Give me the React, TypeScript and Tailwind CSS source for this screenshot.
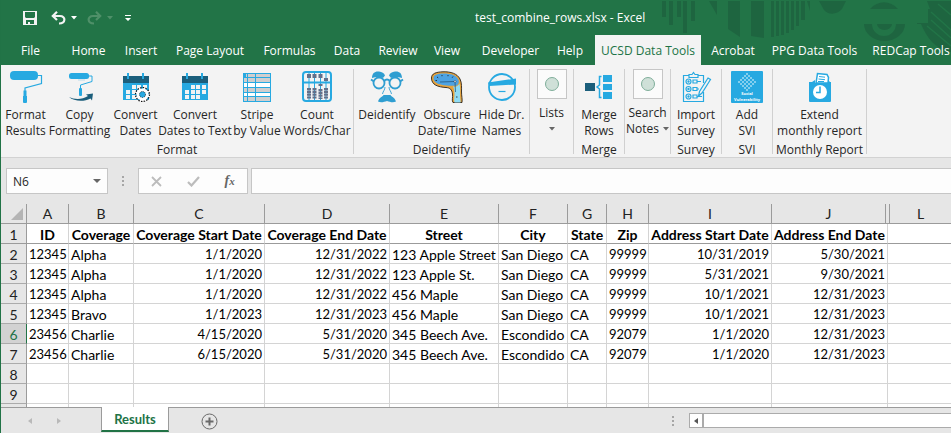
import type { ReactNode } from "react";

const BLUE = "#27a9e1";
const NAVY = "#1b5e7b";

/* ---------- ribbon icons, all on a 32 x 32 grid ---------- */

function Icon({ children }: { children: ReactNode }) {
  return (
    <svg viewBox="0 0 32 32" className="h-8 w-8 shrink-0 overflow-visible" fill="none" aria-hidden="true">
      {children}
    </svg>
  );
}

const RollerIcon = () => (
  <Icon>
    <rect x="0" y="0" width="28" height="9" rx="4" fill={BLUE} />
    <path d="M28 4.500h3.500v8L15 17v3" stroke={BLUE} strokeWidth="1.200" />
    <path d="M13.500 19.500h3v5.500h.5v6a1 1 0 0 1-1 1h-2a1 1 0 0 1-1-1v-6h.5z" fill={BLUE} />
  </Icon>
);

const CopyRollerIcon = () => (
  <Icon>
    <rect x="5" y="2" width="20" height="6" rx="2.500" fill={BLUE} />
    <path d="M25 5h3v5.500L16.500 14v3" stroke={BLUE} strokeWidth="1" />
    <rect x="15" y="17" width="3" height="8" rx="1" fill={BLUE} />
    <path d="M14 9h7" stroke={BLUE} strokeOpacity=".3" />
    <path d="M5 26c5 2.500 13 3 19-1l-2-1.500 7-1-1 7-1.500-2C20 31 10 30.500 5 26z" fill={NAVY} />
  </Icon>
);

function CalendarBase() {
  return (
    <>
      <rect x="3" y="5" width="26" height="24" fill={BLUE} />
      <rect x="3" y="5" width="26" height="7" fill={NAVY} />
      <rect x="7" y="2" width="2" height="6" fill={BLUE} />
      <rect x="22" y="2" width="2" height="6" fill={BLUE} />
      {[13, 18, 23].map((y) =>
        [6, 12, 17, 23].map((x) =>
          (y === 13 && x === 6) || (y === 23 && x === 23) ? null : (
            <rect key={`${x}-${y}`} x={x} y={y + 1} width="4" height="4" fill="#f3f3f3" />
          ),
        ),
      )}
    </>
  );
}

const CalendarIcon = () => (
  <Icon>
    <CalendarBase />
  </Icon>
);

const CalendarGearIcon = () => (
  <Icon>
    <CalendarBase />
    <circle cx="22.500" cy="23.500" r="6" fill="#fff" />
    <circle cx="22.500" cy="23.500" r="6.500" stroke="#fff" strokeWidth="2.500" strokeDasharray="2.600 2.500" />
    <circle cx="22.500" cy="23.500" r="7" stroke="#111" strokeWidth="1.200" strokeDasharray="1.500 1.250" />
    <circle cx="22.500" cy="23.500" r="3" fill={BLUE} stroke="#111" strokeWidth=".8" strokeDasharray="1 1" />
  </Icon>
);

const StripeIcon = () => (
  <Icon>
    <rect x="2" y="2" width="28" height="29" fill="#fff" />
    <rect x="2" y="2" width="28" height="4" fill="#d0cece" />
    <rect x="2" y="2" width="3" height="4" fill={BLUE} />
    <rect x="2" y="7" width="28" height="4" fill="#d0cece" />
    <rect x="2" y="17" width="28" height="5" fill="#d0cece" />
    <rect x="2" y="26" width="28" height="4" fill="#d0cece" />
    <path
      d="M2 2.500h28M2 6.500h28M2 11.500h28M2 16.500h28M2 21.500h28M2 25.500h28M2 30.500h28M2.500 2v29M6.500 2v29M14.500 2v29M29.500 2v29"
      stroke={BLUE}
      shapeRendering="crispEdges"
    />
  </Icon>
);

const AbacusIcon = () => (
  <Icon>
    <rect x="2" y="1" width="28" height="29" rx="3" fill="#f3f3f3" stroke={BLUE} strokeWidth="2" />
    <path d="M2 11.500h28" stroke={BLUE} strokeWidth="2" />
    <path d="M8 2v27M13.500 2v27M19.500 2v27M25 2v27" stroke={BLUE} strokeWidth="1" />
    <path d="M8 3v4M13.500 3v4M19.500 3v4M25 7v3" stroke="#63708a" strokeWidth="4" />
    <path d="M8 17v11M13.500 17v11M19.500 13v2M19.500 18v10M25 17v11" stroke="#63708a" strokeWidth="4" strokeDasharray="2.200 .6" />
  </Icon>
);

const DisguiseIcon = () => (
  <Icon>
    <g fill="#2f9ed1">
      <path d="M1 7c0-5 3-7 7-6.500 3 .3 5 1.500 6 4L12 7C9 5.500 5 5.500 1 7z" />
      <path d="M31 7c0-5-3-7-7-6.500-3 .3-5 1.500-6 4L20 7c3-1.500 7-1.500 11 0z" />
      <path d="M12.500 24h7c1 2 4 2 5.500 6.500-3 1.500-6 .500-9-.5-3 1-6 2-9 .5C8.500 26 11.500 26 12.500 24z" />
    </g>
    <g stroke="#2f9ed1">
      <circle cx="8" cy="12" r="5.500" strokeWidth="1.800" />
      <circle cx="24" cy="12" r="5.500" strokeWidth="1.800" />
      <path d="M13 10c2-2 4-2 6 0M0 8.500l3 2M32 8.500l-3 2" strokeWidth="2" />
      <path d="M14 16c0 3-2 4-2.500 7M18 16c0 3 2 4 2.500 7" strokeWidth=".9" />
    </g>
  </Icon>
);

const MeltingClockIcon = () => (
  <Icon>
    <path
      d="M.5 7C.5 2.500 5 1 12 .8c8-.2 14 1.700 17 7.200 2 4 1.500 9 1.500 13 0 4 1 7 .5 10.500h-9c-1.500-2 0-5-.5-8.500C21 18.500 19 16.800 15 16.500 7 16 .5 14 .5 7z"
      fill="#e8a33c"
      stroke="#2b2318"
      strokeWidth=".9"
    />
    <path d="M2.500 7c0-3 4-4.500 10-4.500 8 0 13 2 15 6.500 1 3-.5 6-4 5.800C19 14.500 17 14.800 13 14.200 6.500 13.500 2.500 11 2.500 7z" fill="#4da3e3" />
    <path d="M22 15.500c3 .5 5.500-.5 6.500-3 1 5 .5 8 .5 12 0 3 .8 5 .5 7h-6c-1-3 .3-6 0-9.500-.2-2.500-.5-4.500-1.500-6.500z" fill="#8fdcf5" />
    <path d="M9 11l15-.5M24 11l.5 10" stroke="#1f4a6b" strokeWidth=".7" />
    <path d="M6 6l1.200.8M11 4v1.200M17 4v1.200M22 5.500l-.8 1.200M4.500 9.500h1.500M25 26h1.500" stroke="#1b1b1b" strokeWidth=".8" />
    <circle cx="24" cy="10.500" r="1" fill="#fff" stroke="#234" strokeWidth=".5" />
  </Icon>
);

const BlindfoldIcon = () => (
  <Icon>
    <circle cx="16" cy="16" r="13" stroke={BLUE} strokeWidth="1.800" />
    <path d="M2 11.500l28-4v6L3 15z" fill={BLUE} />
    <path d="M12.500 20.500h7" stroke={BLUE} strokeWidth="1.200" />
  </Icon>
);

const MergeIcon = () => (
  <Icon>
    <rect x="2" y="12" width="10" height="8" fill={NAVY} />
    <rect x="20" y="4" width="9" height="7" fill={BLUE} />
    <rect x="20" y="13" width="9" height="6" fill={BLUE} />
    <rect x="20" y="21" width="9" height="7" fill={BLUE} />
    <path d="M18.500 5.500h-2v8.500L14 16l2.500 2v8.500h2" stroke={BLUE} strokeWidth="1.500" />
  </Icon>
);

const SurveyIcon = () => (
  <Icon>
    <g stroke={BLUE} strokeWidth="1.200">
      <path d="M23.500 21v9.500h-20v-26h6M18 4.500h5.500V12M9 6.500v-3h3l1.500-2 1.500 2h3v3z" />
      <circle cx="8.500" cy="10.500" r="2.500" />
      <circle cx="8.500" cy="18" r="2.500" />
      <circle cx="8.500" cy="25.500" r="2.500" />
      <circle cx="8.500" cy="10.500" r=".6" />
      <circle cx="8.500" cy="18" r=".6" />
      <circle cx="8.500" cy="25.500" r=".6" />
      <path d="M13 9h4v3h-4zM13 16.500h4v3h-4zM13 24h4v3h-4zM17 10.500h4M17 18h2M17 25.500h5" />
      <path d="M28 7l2.500 1.500L22 22l-3.500 3 1-4.500z" />
    </g>
  </Icon>
);

const SviIcon = () => (
  <Icon>
    <rect width="32" height="32" rx="1" fill={BLUE} />
    <g fill="#fff">
      {[
        [16, 3], [14, 5], [18, 5], [12, 7], [16, 7], [20, 7], [10, 9], [14, 9], [18, 9], [22, 9],
        [8, 11], [12, 11], [16, 11], [20, 11], [24, 11], [10, 13], [14, 13], [18, 13], [22, 13],
        [12, 15], [16, 15], [20, 15], [14, 17], [18, 17], [16, 19],
      ].map(([x, y]) => (
        <circle key={`${x}-${y}`} cx={x} cy={y} r=".8" />
      ))}
    </g>
    <g fontSize="4" fontWeight="700" fill="#fff" textAnchor="middle" fontFamily="Open Sans, sans-serif">
      <text x="16" y="24">
        Social
      </text>
      <text x="16" y="30">
        Vulnerability
      </text>
    </g>
  </Icon>
);

const ReportClockIcon = () => (
  <Icon>
    <path d="M12 12l1.500-9.500L23 3.500l1.500 3L24 12z" fill="#fff" stroke={BLUE} strokeWidth="1.500" />
    <path d="M15 5.500l6 .7M14.500 8l6.500.7M14 10.500h6" stroke={BLUE} strokeWidth="1" />
    <path d="M5 11h3l3-2v3h13V9l2 2h1v19a1 1 0 0 1-1 1H6a1 1 0 0 1-1-1z" fill={BLUE} />
    <circle cx="16" cy="21" r="7" fill="#fff" />
    <path d="M16 15.500V21.500h-4" stroke={BLUE} strokeWidth="1.500" />
  </Icon>
);

/* ---------- ribbon building blocks ---------- */

function RibbonButton({ icon, lines, width }: { icon: ReactNode; lines: string[]; width: string }) {
  return (
    <button type="button" className={`flex flex-col items-center pt-1.5 ${width}`}>
      {icon}
      <span className="mt-1 block leading-4 whitespace-nowrap">
        {lines.map((l) => (
          <span key={l} className="block">
            {l}
          </span>
        ))}
      </span>
    </button>
  );
}

function GalleryButton({ first, second, width }: { first: string; second?: string; width: string }) {
  return (
    <button type="button" className={`flex flex-col items-center pt-1 ${width}`}>
      <span className="flex h-[30px] w-[30px] items-center justify-center border border-[#c6c6c6] bg-[#fbfbfb]">
        <span className="h-3.5 w-3.5 rounded-full border border-[#7fae9a] bg-[#cfe0d8]" />
      </span>
      <span className="mt-1.5 block leading-4">{first}</span>
      <span className="flex h-4 items-center gap-1">
        {second}
        <Caret className="text-[#666]" />
      </span>
    </button>
  );
}

function Caret({ className }: { className: string }) {
  return (
    <svg viewBox="0 0 6 4" className={`h-1 w-1.5 ${className}`} aria-hidden="true">
      <path d="M0 0h6L3 3.500z" fill="currentColor" />
    </svg>
  );
}

function Group({ label, width, children }: { label?: string; width: string; children: ReactNode }) {
  return (
    <section aria-label={label} className={`flex shrink-0 flex-col ${width}`}>
      <div className="flex h-[77px]">{children}</div>
      <div className="text-center leading-[15px]">{label}</div>
    </section>
  );
}

const Divider = () => <div className="mt-1 h-[85px] w-px shrink-0 bg-[#d0d0d0]" />;

const tabs = [
  { name: "File", width: "w-[59px]" },
  { name: "Home", width: "w-[57px]" },
  { name: "Insert", width: "w-[48px]" },
  { name: "Page Layout", width: "w-[90px]" },
  { name: "Formulas", width: "w-[69px]" },
  { name: "Data", width: "w-[46px]" },
  { name: "Review", width: "w-[56px]" },
  { name: "View", width: "w-[42px]" },
  { name: "Developer", width: "w-[85px]" },
  { name: "Help", width: "w-[42px] pr-2" },
  { name: "UCSD Data Tools", width: "w-[106px]" },
  { name: "Acrobat", width: "w-[64px]" },
  { name: "PPG Data Tools", width: "w-[99px]" },
  { name: "REDCap Tools", width: "w-[94px]" },
];

function TitleArt() {
  return (
    <svg viewBox="660 0 291 66" className="absolute top-0 right-0 h-[66px] w-[291px]" fill="#1e6540" aria-hidden="true">
      <path d="M662 1h4v16h-4zM669 1h4v24h-4zM677 1h4v16h-4zM683 1h4v32h-4zM691 1h4v20h-4z" />
      <path d="M709 1h8v14zM728 1h12v36l-12-8zM751 1h13v37l-13-2z" />
      <path d="M771 1h3v36h-3zM776 1h3v35h-3zM781 1h3v34h-3zM786 1h3v32h-3zM791 1h3v29h-3zM796 1h3v25h-3zM801 1h4v19h-4zM807 1h3v10z" />
      <path d="M819 1h27l-4 8c-5 6-14 6-18 1z" />
      <path d="M870 9c8-9 20-9 28 0z" />
      <path d="M864 24h8a12 12 0 0 0 24 0h9a20.500 17 0 0 1-41 0zM877 24h15a7.500 6 0 0 1-15 0z" />
      <path d="M917 9h13l-3-8h24v51c-16-3-24-14-30-28h-4v-1h11V9z" />
      <path d="M931 12l20 18M931 20l20 18M927 26l24 20M938 4l13 11" stroke="#227447" strokeWidth="1.500" />
    </svg>
  );
}

/* ---------- sheet data ---------- */

const headings = [
  "ID", "Coverage", "Coverage Start Date", "Coverage End Date", "Street",
  "City", "State", "Zip", "Address Start Date", "Address End Date",
];

const rows = [
  ["12345", "Alpha", "1/1/2020", "12/31/2022", "123 Apple Street", "San Diego", "CA", "99999", "10/31/2019", "5/30/2021"],
  ["12345", "Alpha", "1/1/2020", "12/31/2022", "123 Apple St.", "San Diego", "CA", "99999", "5/31/2021", "9/30/2021"],
  ["12345", "Alpha", "1/1/2020", "12/31/2022", "456 Maple", "San Diego", "CA", "99999", "10/1/2021", "12/31/2023"],
  ["12345", "Bravo", "1/1/2023", "12/31/2023", "456 Maple", "San Diego", "CA", "99999", "10/1/2021", "12/31/2023"],
  ["23456", "Charlie", "4/15/2020", "5/31/2020", "345 Beech Ave.", "Escondido", "CA", "92079", "1/1/2020", "12/31/2023"],
  ["23456", "Charlie", "6/15/2020", "5/31/2020", "345 Beech Ave.", "Escondido", "CA", "92079", "1/1/2020", "12/31/2023"],
  [], [], [],
];

const VISIBLE_ROWS = 9;
const numeric = [true, false, true, true, false, false, false, true, true, true];

function RowHeader({ n, dark }: { n: number; dark?: boolean }) {
  const active = n === 6;
  return (
    <th
      scope="row"
      className={`h-5 border-r border-b px-0 pt-0.5 pb-0 text-[14px] font-normal ${
        active
          ? "border-r-[#217346] border-b-[#ababab] bg-[#d2d2d2] text-[#217346]"
          : `border-r-[#9b9b9b] bg-[#e6e6e6] text-[#222] ${dark ? "border-b-[#9b9b9b]" : "border-b-[#ababab]"}`
      }`}
    >
      {n <= VISIBLE_ROWS ? n : null}
    </th>
  );
}

function Sheet() {
  return (
    <table className="w-full table-fixed border-separate border-spacing-0 font-['Lato','Liberation_Sans',sans-serif] text-[14px] leading-[17px] text-black">
      <colgroup>
        <col className="w-[26px]" />
        <col className="w-[42px]" />
        <col className="w-[65px]" />
        <col className="w-[131px]" />
        <col className="w-[125px]" />
        <col className="w-[109px]" />
        <col className="w-[69px]" />
        <col className="w-[39px]" />
        <col className="w-[42px]" />
        <col className="w-[123px]" />
        <col className="w-[114px]" />
        <col className="w-[2px]" />
        <col className="w-[2px]" />
        <col />
      </colgroup>
      <thead>
        <tr className="bg-[#e6e6e6] text-[#222]">
          <td className="h-5 border-r border-b border-[#9b9b9b] p-0">
            <svg viewBox="0 0 12 12" className="ml-2.5 h-3 w-3" aria-hidden="true">
              <path d="M12 0v12H0z" fill="#b4b4b4" />
            </svg>
          </td>
          {["A", "B", "C", "D", "E", "F", "G", "H", "I", "J"].map((c) => (
            <th key={c} scope="col" className="h-5 border-r border-b border-[#9b9b9b] p-0 font-normal">
              {c}
            </th>
          ))}
          <td colSpan={2} className="border-r border-b border-[#9b9b9b] p-0" />
          <th scope="col" className="h-5 border-b border-[#9b9b9b] p-0 font-normal">
            L
          </th>
        </tr>
      </thead>
      <tbody>
        <tr>
          <RowHeader n={1} dark />
          {headings.map((h, i) => (
            <th
              key={h}
              scope="col"
              colSpan={i === 9 ? 2 : 1}
              className="h-5 border-r border-b border-r-[#d4d4d4] border-b-[#9b9b9b] px-0 pt-0.5 pb-0 text-center font-bold whitespace-nowrap"
            >
              {h}
            </th>
          ))}
          <td colSpan={2} className="border-b border-[#9b9b9b] p-0" />
        </tr>
        {rows.map((row, r) => (
          <tr key={r}>
            <RowHeader n={r + 2} />
            {headings.map((h, i) => (
              <td
                key={h}
                colSpan={i === 9 ? 2 : 1}
                className={`h-5 border-r border-b border-[#d4d4d4] px-0.5 pt-0.5 pb-0 whitespace-nowrap ${
                  numeric[i] ? "text-right text-[13px]" : "text-left"
                }`}
              >
                {row[i]}
              </td>
            ))}
            <td colSpan={2} className="border-b border-[#d4d4d4] p-0" />
          </tr>
        ))}
      </tbody>
    </table>
  );
}

function Dots() {
  return (
    <span className="flex flex-col gap-0.5" aria-hidden="true">
      <span className="h-0.5 w-0.5 bg-[#a6a6a6]" />
      <span className="h-0.5 w-0.5 bg-[#a6a6a6]" />
      <span className="h-0.5 w-0.5 bg-[#a6a6a6]" />
    </span>
  );
}

export default function App() {
  return (
    <div className="flex h-screen flex-col overflow-hidden border-l border-[#217346] bg-white font-['Open_Sans','Noto_Sans',sans-serif] text-[12px] text-[#262626]">
      <header className="relative shrink-0 bg-[#227447] text-white">
        <TitleArt />
        <div className="relative flex h-[35px] items-center pt-px">
          <div className="flex w-[474px] shrink-0 items-center pl-[22px]">
            <button type="button" aria-label="Save">
              <svg viewBox="0 0 14 14" className="h-3.5 w-3.5" aria-hidden="true">
                <path fillRule="evenodd" fill="#f3f3f3" d="M0 0h14v14H0zM2 1v5l1 1h8l1-1V1zM3 9v4h2v-2h2v2h4V9z" />
              </svg>
            </button>
            <button type="button" aria-label="Undo" className="ml-3.5">
              <svg viewBox="0 0 15 14" className="h-3.5 w-[15px]" fill="none" stroke="#f3f3f3" strokeWidth="2.200" aria-hidden="true">
                <path d="M6 .8L1.800 5 6 9M2 5h7c6 0 6 7.500-1 7.500" />
              </svg>
            </button>
            <button type="button" aria-label="Undo history" className="ml-[5px]">
              <Caret className="text-white" />
            </button>
            <button type="button" aria-label="Redo" className="ml-2.5" disabled>
              <svg viewBox="0 0 15 14" className="h-3.5 w-[15px]" fill="none" stroke="#4f9069" strokeWidth="2.200" aria-hidden="true">
                <path d="M9 .8L13.200 5 9 9M13 5H6c-6 0-6 7.500 1 7.500" />
              </svg>
            </button>
            <button type="button" aria-label="Redo history" className="ml-[5px]" disabled>
              <Caret className="text-[#4f9069]" />
            </button>
            <button type="button" aria-label="Customize toolbar" className="ml-3">
              <svg viewBox="0 0 6 6" className="h-1.5 w-1.5" fill="#fff" aria-hidden="true">
                <path d="M0 0h6v1H0zM0 3h6L3 6z" />
              </svg>
            </button>
          </div>
          <h1 className="whitespace-nowrap">test_combine_rows.xlsx - Excel</h1>
        </div>
        <nav className="relative flex h-[30px] overflow-hidden">
          {tabs.map((t) => (
            <button
              key={t.name}
              type="button"
              className={`flex shrink-0 items-center justify-center pt-px whitespace-nowrap ${t.width} ${
                t.name === "UCSD Data Tools" ? "bg-[#f3f3f3] text-[#217346]" : ""
              }`}
            >
              {t.name}
            </button>
          ))}
        </nav>
      </header>

      <div className="flex h-[93px] shrink-0 overflow-hidden border-b border-[#d2d2d2] bg-[#f3f3f3]">
        <Group label="Format" width="w-[352px]">
          <RibbonButton icon={<RollerIcon />} lines={["Format", "Results"]} width="w-[49px]" />
          <RibbonButton icon={<CopyRollerIcon />} lines={["Copy", "Formatting"]} width="w-[59px]" />
          <RibbonButton icon={<CalendarGearIcon />} lines={["Convert", "Dates"]} width="w-[53px]" />
          <RibbonButton icon={<CalendarIcon />} lines={["Convert", "Dates to Text"]} width="w-[66px]" />
          <RibbonButton icon={<StripeIcon />} lines={["Stripe", "by Value"]} width="w-[58px]" />
          <RibbonButton icon={<AbacusIcon />} lines={["Count", "Words/Char"]} width="w-[62px]" />
        </Group>
        <Divider />
        <Group label="Deidentify" width="w-[175px]">
          <RibbonButton icon={<DisguiseIcon />} lines={["Deidentify"]} width="w-[66px]" />
          <RibbonButton icon={<MeltingClockIcon />} lines={["Obscure", "Date/Time"]} width="w-[54px]" />
          <RibbonButton icon={<BlindfoldIcon />} lines={["Hide Dr.", "Names"]} width="w-[55px]" />
        </Group>
        <Divider />
        <Group width="w-[43px]">
          <GalleryButton first="Lists" width="w-[43px]" />
        </Group>
        <Divider />
        <Group label="Merge" width="w-[50px]">
          <RibbonButton icon={<MergeIcon />} lines={["Merge", "Rows"]} width="w-[50px]" />
        </Group>
        <Divider />
        <Group width="w-[45px]">
          <GalleryButton first="Search" second="Notes" width="w-[45px]" />
        </Group>
        <Divider />
        <Group label="Survey" width="w-[50px]">
          <RibbonButton icon={<SurveyIcon />} lines={["Import", "Survey"]} width="w-[50px]" />
        </Group>
        <Divider />
        <Group label="SVI" width="w-[50px]">
          <RibbonButton icon={<SviIcon />} lines={["Add", "SVI"]} width="w-[50px]" />
        </Group>
        <Divider />
        <Group label="Monthly Report" width="w-[93px]">
          <RibbonButton icon={<ReportClockIcon />} lines={["Extend", "monthly report"]} width="w-[93px]" />
        </Group>
        <Divider />
      </div>

      <div className="flex h-[46px] shrink-0 items-center bg-[#e6e6e6] pl-[5px]">
        <div className="flex h-[26px] w-[102px] items-center border border-[#c6c6c6] bg-[#fdfdfd]">
          <input aria-label="Name box" defaultValue="N6" className="w-full min-w-0 flex-1 bg-transparent pt-px pl-1.5 outline-none" />
          <button type="button" aria-label="Show names" className="px-1.5">
            <svg viewBox="0 0 8 4" className="h-1 w-2" aria-hidden="true">
              <path d="M0 0h8L4 4z" fill="#666" />
            </svg>
          </button>
        </div>
        <div className="flex w-[30px] justify-center">
          <Dots />
        </div>
        <div className="flex h-[26px] w-[110px] items-center justify-around border border-[#c6c6c6] bg-[#fdfdfd]">
          <button type="button" aria-label="Cancel">
            <svg viewBox="0 0 11 11" className="h-[11px] w-[11px]" stroke="#bcbcbc" strokeWidth="1.800" aria-hidden="true">
              <path d="M1 1l9 9M10 1l-9 9" />
            </svg>
          </button>
          <button type="button" aria-label="Enter">
            <svg viewBox="0 0 13 11" className="h-[11px] w-[13px]" fill="none" stroke="#bcbcbc" strokeWidth="2.200" aria-hidden="true">
              <path d="M1 6l3.500 3.500L12 1" />
            </svg>
          </button>
          <button
            type="button"
            aria-label="Insert function"
            className="font-['Liberation_Serif',serif] text-[14px] leading-4 font-bold text-[#666] italic"
          >
            f<span className="text-[11px]">x</span>
          </button>
        </div>
        <input aria-label="Formula bar" className="ml-[3px] h-[26px] min-w-0 flex-1 border border-r-0 border-[#c6c6c6] bg-[#fdfdfd] outline-none" />
      </div>

      <main className="min-h-0 flex-1 overflow-hidden">
        <Sheet />
      </main>

      <footer className="flex h-[26px] shrink-0 items-start border-t border-[#9b9b9b] bg-[#e6e6e6]">
        <div className="flex h-full w-[100px] items-center gap-[25px] pl-[27px]">
          <button type="button" aria-label="Previous sheet" disabled>
            <svg viewBox="0 0 4 6" className="h-1.5 w-1" aria-hidden="true">
              <path d="M4 0v6L0 3z" fill="#b9b9b9" />
            </svg>
          </button>
          <button type="button" aria-label="Next sheet" disabled>
            <svg viewBox="0 0 4 6" className="h-1.5 w-1" aria-hidden="true">
              <path d="M0 0v6l4-3z" fill="#b9b9b9" />
            </svg>
          </button>
        </div>
        <button
          type="button"
          className="-mt-px h-[25px] w-[68px] border-x border-b-2 border-x-[#9b9b9b] border-b-[#217346] bg-white pt-0.5 font-['Lato','Liberation_Sans',sans-serif] text-[13px] font-bold text-[#217346]"
        >
          Results
        </button>
        <button type="button" aria-label="New sheet" className="mt-[5px] ml-8">
          <svg viewBox="0 0 17 17" className="h-[17px] w-[17px]" fill="none" stroke="#6a6a6a" aria-hidden="true">
            <circle cx="8.500" cy="8.500" r="7.500" />
            <path d="M8.500 4.500v8M4.500 8.500h8" strokeWidth="2" />
          </svg>
        </button>
        <div className="flex h-full min-w-0 flex-1 items-center justify-end">
          <Dots />
          <div className="ml-[15px] flex h-[15px] w-[262px] border border-r-0 border-[#ababab] bg-white">
            <button type="button" aria-label="Scroll left" className="flex w-[14px] items-center justify-center border-r-2 border-[#ababab]">
              <svg viewBox="0 0 4 6" className="h-1.5 w-1" aria-hidden="true">
                <path d="M4 0v6L0 3z" fill="#555" />
              </svg>
            </button>
          </div>
        </div>
      </footer>
    </div>
  );
}
